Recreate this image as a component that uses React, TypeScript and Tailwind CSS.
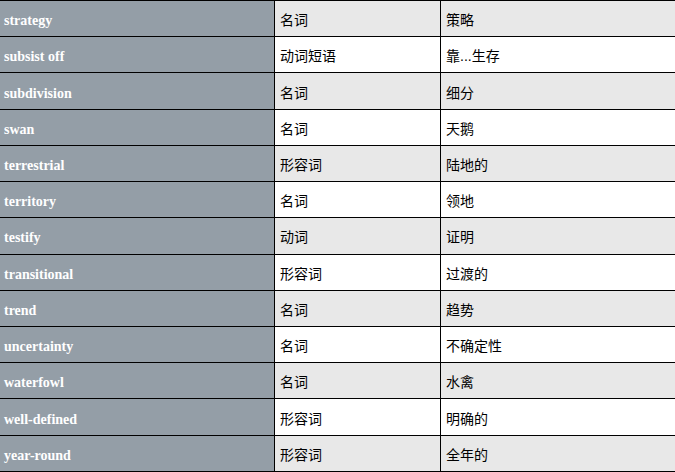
const rows: [string, string, string][] = [
  ["strategy", "名词", "策略"],
  ["subsist off", "动词短语", "靠...生存"],
  ["subdivision", "名词", "细分"],
  ["swan", "名词", "天鹅"],
  ["terrestrial", "形容词", "陆地的"],
  ["territory", "名词", "领地"],
  ["testify", "动词", "证明"],
  ["transitional", "形容词", "过渡的"],
  ["trend", "名词", "趋势"],
  ["uncertainty", "名词", "不确定性"],
  ["waterfowl", "名词", "水禽"],
  ["well-defined", "形容词", "明确的"],
  ["year-round", "形容词", "全年的"],
];

export default function App() {
  return (
    <div className="w-[675px] h-[472px] overflow-hidden bg-white">
      <table className="border-collapse -ml-px w-[678px] h-[472px] table-fixed">
        <colgroup>
          <col className="w-[275px]" />
          <col className="w-[166px]" />
          <col />
        </colgroup>
        <tbody>
          {rows.map(([word, pos, meaning], i) => (
            <tr key={word} className={i % 2 === 0 ? "bg-[#e8e8e8]" : "bg-white"}>
              <td className="border border-black bg-[#949ea7] pl-[4px] pt-[4px] align-middle text-[14px] font-bold text-white font-['Liberation_Serif','Times_New_Roman',serif]">
                {word}
              </td>
              <td className="border border-black pl-[5px] pt-[4px] align-middle text-[14px] text-black font-['Liberation_Sans','Noto_Sans_CJK_SC',sans-serif]">
                {pos}
              </td>
              <td className="border border-black pl-[5px] pt-[4px] align-middle text-[14px] text-black font-['Liberation_Sans','Noto_Sans_CJK_SC',sans-serif]">
                {meaning}
              </td>
            </tr>
          ))}
        </tbody>
      </table>
    </div>
  );
}
